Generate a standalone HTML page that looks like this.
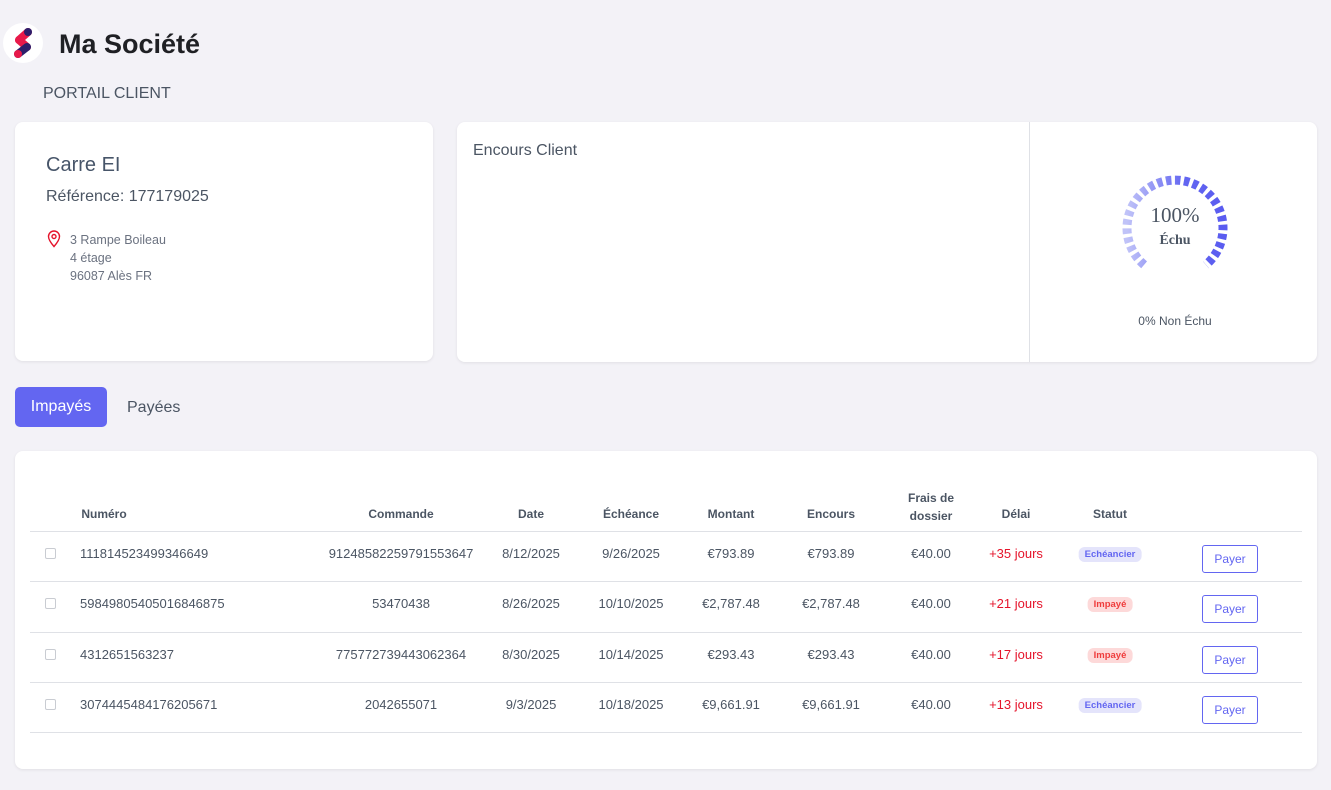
<!DOCTYPE html>
<html><head><meta charset="utf-8"><style>
*{box-sizing:border-box;margin:0;padding:0}
body{width:1331px;height:790px;background:#f3f2f7;font-family:"Liberation Sans",sans-serif;position:relative;overflow:hidden;color:#4b5563}
.a{position:absolute}
.card{position:absolute;background:#fff;border-radius:8px;box-shadow:0 1px 3px rgba(0,0,0,.08)}
.c{position:absolute;transform:translateX(-50%);white-space:nowrap;font-size:13px;color:#4b5563}
.h{font-weight:bold;font-size:12px;color:#4b5563}
.line{position:absolute;left:30px;width:1272px;height:1px;background:#dfe1e6}
.cb{position:absolute;left:45px;width:11px;height:11px;border:1px solid #c9ccd2;border-radius:2px}
.red{color:#e5142b}
.badge{position:absolute;transform:translateX(-50%);font-size:9.5px;font-weight:bold;padding:2px 6px;border-radius:6px;white-space:nowrap}
.ech{background:#e4e4fb;color:#6366f1}
.imp{background:#fdd9d9;color:#ef3b3b}
.btn{position:absolute;left:1202px;width:56px;height:28px;border:1px solid #6366f1;border-radius:3px;color:#6366f1;font-size:12px;text-align:center;line-height:26px}
</style></head><body>
<div class="a" style="left:3px;top:23px;width:40px;height:40px;border-radius:50%;background:#fff"></div>
<svg class="a" style="left:3px;top:23px" width="40" height="40" viewBox="0 0 40 40">
<line x1="25" y1="9" x2="16" y2="17" stroke="#e8194a" stroke-width="8" stroke-linecap="round"/>
<line x1="16" y1="17" x2="24" y2="24" stroke="#e8194a" stroke-width="8" stroke-linecap="round"/>
<line x1="24" y1="24" x2="15" y2="31" stroke="#2d1f6b" stroke-width="8" stroke-linecap="round"/>
<circle cx="25" cy="9" r="4" fill="#2d1f6b"/>
<circle cx="15" cy="31" r="4" fill="#e8194a"/>
</svg>
<div class="a" style="left:59px;top:29px;font-size:27px;font-weight:bold;color:#1f2024">Ma Société</div>
<div class="a" style="left:43px;top:85px;font-size:16px;color:#4b5563">PORTAIL CLIENT</div>

<div class="card" style="left:15px;top:122px;width:418px;height:239px">
<div class="a" style="left:31px;top:32px;font-size:20px;color:#475569">Carre EI</div>
<div class="a" style="left:31px;top:66px;font-size:16px;color:#4b5563">Référence: 177179025</div>
<svg class="a" style="left:32px;top:108px" width="14" height="18" viewBox="0 0 14 18"><path d="M7 16.5C3.5 12.5 1.5 9.5 1.5 6.5a5.5 5.5 0 0 1 11 0c0 3-2 6-5.5 10z" fill="none" stroke="#e5142b" stroke-width="1.4"/><circle cx="7" cy="6.5" r="2" fill="none" stroke="#e5142b" stroke-width="1.4"/></svg>
<div class="a" style="left:55px;top:109px;font-size:12.5px;line-height:18px;color:#6b7280">3 Rampe Boileau<br>4 étage<br>96087 Alès FR</div>
</div>

<div class="card" style="left:457px;top:122px;width:860px;height:240px">
<div class="a" style="left:16px;top:20px;font-size:16px;color:#4b5563">Encours Client</div>
<div class="a" style="left:572px;top:0;width:1px;height:240px;background:#dfe1e6"></div>
<svg class="a" style="left:660px;top:50px" width="116" height="110" viewBox="0 0 116 110">
<defs><linearGradient id="g" x1="0" x2="1" y1="0" y2="0"><stop offset="0" stop-color="#c0c3f8"/><stop offset="0.6" stop-color="#6366f1"/><stop offset="1" stop-color="#5a5cf0"/></linearGradient></defs>
<path d="M27.1 92.8 A48 48 0 1 1 88.9 92.8" fill="none" stroke="url(#g)" stroke-width="9" stroke-dasharray="5.5 3.5"/>
</svg>
<div class="a" style="left:688px;top:81px;width:60px;text-align:center;font-family:'Liberation Serif',serif;font-size:21px;color:#4b5563">100%</div>
<div class="a" style="left:688px;top:111px;width:60px;text-align:center;font-family:'Liberation Serif',serif;font-size:14px;font-weight:bold;color:#4b5563">Échu</div>
<div class="a" style="left:660px;top:192px;width:116px;text-align:center;font-size:12px;color:#4b5563">0% Non Échu</div>
</div>

<div class="a" style="left:15px;top:387px;width:92px;height:40px;background:#6366f1;border-radius:5px;color:#fff;font-size:16px;text-align:center;line-height:40px">Impayés</div>
<div class="a" style="left:127px;top:399px;font-size:16px;color:#4b5563">Payées</div>

<div class="card" style="left:15px;top:451px;width:1302px;height:318px"></div>
<div class="c h" style="left:104px;top:507px">Numéro</div>
<div class="c h" style="left:401px;top:507px">Commande</div>
<div class="c h" style="left:531px;top:507px">Date</div>
<div class="c h" style="left:631px;top:507px">Échéance</div>
<div class="c h" style="left:731px;top:507px">Montant</div>
<div class="c h" style="left:831px;top:507px">Encours</div>
<div class="c h" style="left:931px;top:489px;text-align:center;line-height:18px">Frais de<br>dossier</div>
<div class="c h" style="left:1016px;top:507px">Délai</div>
<div class="c h" style="left:1110px;top:507px">Statut</div>
<div class="line" style="top:531px"></div>
<div class="line" style="top:581px"></div>
<div class="line" style="top:632px"></div>
<div class="line" style="top:682px"></div>
<div class="line" style="top:732px"></div>

<div class="cb" style="top:548px"></div>
<div class="a" style="left:80px;top:546px;font-size:13px">111814523499346649</div>
<div class="c" style="left:401px;top:546px">91248582259791553647</div>
<div class="c" style="left:531px;top:546px">8/12/2025</div>
<div class="c" style="left:631px;top:546px">9/26/2025</div>
<div class="c" style="left:731px;top:546px">€793.89</div>
<div class="c" style="left:831px;top:546px">€793.89</div>
<div class="c" style="left:931px;top:546px">€40.00</div>
<div class="c red" style="left:1016px;top:546px">+35 jours</div>
<div class="badge ech" style="left:1110px;top:547px">Echéancier</div>
<div class="btn" style="top:545px">Payer</div>

<div class="cb" style="top:598px"></div>
<div class="a" style="left:80px;top:596px;font-size:13px">59849805405016846875</div>
<div class="c" style="left:401px;top:596px">53470438</div>
<div class="c" style="left:531px;top:596px">8/26/2025</div>
<div class="c" style="left:631px;top:596px">10/10/2025</div>
<div class="c" style="left:731px;top:596px">€2,787.48</div>
<div class="c" style="left:831px;top:596px">€2,787.48</div>
<div class="c" style="left:931px;top:596px">€40.00</div>
<div class="c red" style="left:1016px;top:596px">+21 jours</div>
<div class="badge imp" style="left:1110px;top:597px">Impayé</div>
<div class="btn" style="top:595px">Payer</div>

<div class="cb" style="top:649px"></div>
<div class="a" style="left:80px;top:647px;font-size:13px">4312651563237</div>
<div class="c" style="left:401px;top:647px">775772739443062364</div>
<div class="c" style="left:531px;top:647px">8/30/2025</div>
<div class="c" style="left:631px;top:647px">10/14/2025</div>
<div class="c" style="left:731px;top:647px">€293.43</div>
<div class="c" style="left:831px;top:647px">€293.43</div>
<div class="c" style="left:931px;top:647px">€40.00</div>
<div class="c red" style="left:1016px;top:647px">+17 jours</div>
<div class="badge imp" style="left:1110px;top:648px">Impayé</div>
<div class="btn" style="top:646px">Payer</div>

<div class="cb" style="top:699px"></div>
<div class="a" style="left:80px;top:697px;font-size:13px">3074445484176205671</div>
<div class="c" style="left:401px;top:697px">2042655071</div>
<div class="c" style="left:531px;top:697px">9/3/2025</div>
<div class="c" style="left:631px;top:697px">10/18/2025</div>
<div class="c" style="left:731px;top:697px">€9,661.91</div>
<div class="c" style="left:831px;top:697px">€9,661.91</div>
<div class="c" style="left:931px;top:697px">€40.00</div>
<div class="c red" style="left:1016px;top:697px">+13 jours</div>
<div class="badge ech" style="left:1110px;top:698px">Echéancier</div>
<div class="btn" style="top:696px">Payer</div>
</body></html>
